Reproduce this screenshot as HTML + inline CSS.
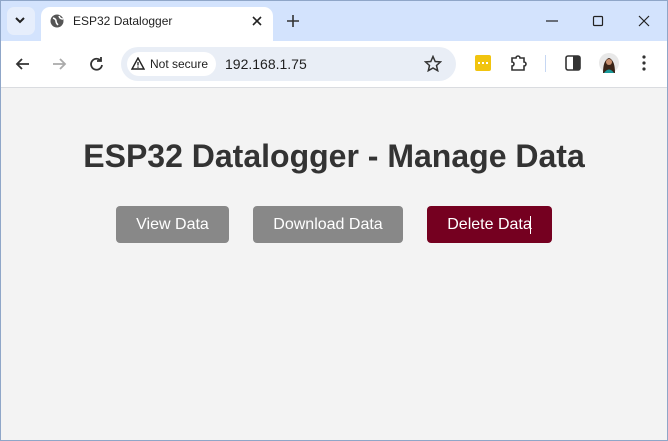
<!DOCTYPE html>
<html><head><style>
*{margin:0;padding:0;box-sizing:border-box}
body{width:668px;height:441px;overflow:hidden;font-family:"Liberation Sans",Arial,sans-serif;background:#f3f3f3;position:relative}
.frame{position:absolute;inset:0;border:1px solid #8fa6c8;pointer-events:none;z-index:9}
.tabs{position:absolute;left:0;top:0;width:668px;height:41px;background:#d3e3fd}
.tab{position:absolute;left:41px;top:7px;width:232px;height:34px;background:#fff;border-radius:9px 9px 0 0}
.tt{position:absolute;left:73px;top:14px;font-size:12px;color:#1f1f1f}
.tool{position:absolute;left:0;top:41px;width:668px;height:47px;background:#fff;border-bottom:1px solid #dadce0}
.omni{position:absolute;left:121px;top:47px;width:335px;height:34px;background:#e9eef6;border-radius:17px}
.ns{position:absolute;left:127px;top:52px;width:89px;height:24px;background:#fff;border-radius:12px}
h1{position:absolute;left:0;width:668px;top:138px;text-align:center;font-size:32px;font-weight:bold;color:#333}
.b{position:absolute;top:206px;height:37px;border-radius:4px;color:#fff;font-size:16px;line-height:37px;text-align:center;background:#888}
</style></head><body>
<div class="tabs"></div>
<div style="position:absolute;left:7px;top:7px;width:28px;height:28px;border-radius:7px;background:#e6eefc"></div>
<svg style="position:absolute;left:14px;top:16px" width="12" height="8"><path d="M2 2l4 4 4-4" stroke="#222" stroke-width="2" fill="none"/></svg>
<div class="tab"></div>
<svg style="position:absolute;left:50px;top:14px" width="14" height="14"><circle cx="7" cy="7" r="6.5" fill="#555"/><path d="M3 4q3 1 3 3t2 4M9 2q1 3 4 3" stroke="#fff" stroke-width="1.5" fill="none"/></svg>
<div class="tt">ESP32 Datalogger</div>
<svg style="position:absolute;left:252px;top:16px" width="10" height="10"><path d="M1 1l8 8M9 1l-8 8" stroke="#222" stroke-width="1.6"/></svg>
<svg style="position:absolute;left:287px;top:15px" width="12" height="12"><path d="M6 0v12M0 6h12" stroke="#333" stroke-width="1.6"/></svg>
<svg style="position:absolute;left:546px;top:14px" width="110" height="14"><path d="M0 7h12" stroke="#222" stroke-width="1.2"/><rect x="47.5" y="2.5" width="9" height="9" rx="1" stroke="#222" fill="none" stroke-width="1.2"/><path d="M93 2l10 10M103 2l-10 10" stroke="#222" stroke-width="1.2"/></svg>
<div class="tool"></div>
<svg style="position:absolute;left:15px;top:56px;" width="100" height="16"><path d="M14 8H2M7 3L2 8l5 5" stroke="#333" stroke-width="1.8" fill="none"/><path d="M38 8h12M45 3l5 5-5 5" stroke="#aaa" stroke-width="1.8" fill="none"/><path d="M86 5a5.5 5.5 0 1 0 1 4M86 1v4h-4" stroke="#333" stroke-width="1.8" fill="none"/></svg>
<div class="omni"></div><div class="ns"></div>
<svg style="position:absolute;left:131px;top:57px" width="14" height="13"><path d="M7 1L1 12h12z" stroke="#222" stroke-width="1.4" fill="none"/><path d="M7 5v3.5M7 9.5v1.2" stroke="#222" stroke-width="1.3"/></svg>
<div style="position:absolute;left:150px;top:57px;font-size:12px;color:#1f1f1f">Not secure</div>
<div style="position:absolute;left:225px;top:56px;font-size:14px;color:#1f1f1f">192.168.1.75</div>
<svg style="position:absolute;left:424px;top:55px" width="18" height="17"><path d="M9 1.5l2.2 5 5.3.4-4 3.6 1.2 5.2L9 13l-4.7 2.7 1.2-5.2-4-3.6 5.3-.4z" stroke="#333" stroke-width="1.5" fill="none"/></svg>
<div style="position:absolute;left:475px;top:55px;width:16px;height:16px;background:#f1c40f;border-radius:2px"></div>
<div style="position:absolute;left:478px;top:62px;width:10px;height:2px;border-top:2px dotted #fff"></div>
<svg style="position:absolute;left:510px;top:54px" width="18" height="18"><path d="M2 4h4a2 2 0 0 1 4 0h4v4a2 2 0 0 1 0 4v4H2v-4a2 2 0 0 0 0-4z" stroke="#333" stroke-width="1.6" fill="none"/></svg>
<div style="position:absolute;left:545px;top:55px;width:1px;height:17px;background:#c6d7f3"></div>
<svg style="position:absolute;left:565px;top:55px" width="16" height="16"><rect x="1" y="1" width="14" height="14" rx="2" stroke="#333" stroke-width="1.6" fill="none"/><rect x="8" y="1" width="7" height="14" fill="#333"/></svg>
<svg style="position:absolute;left:599px;top:53px" width="20" height="20"><circle cx="10" cy="10" r="10" fill="#e8e8e8"/><path d="M4 20q0-13 6-15 6 2 6 15z" fill="#3a2418"/><circle cx="10" cy="9" r="3" fill="#c89070"/><path d="M5 20q5-7 10 0z" fill="#1a9a9a"/></svg>
<svg style="position:absolute;left:642px;top:55px" width="4" height="16"><circle cx="2" cy="2" r="1.6" fill="#333"/><circle cx="2" cy="8" r="1.6" fill="#333"/><circle cx="2" cy="14" r="1.6" fill="#333"/></svg>
<h1>ESP32 Datalogger - Manage Data</h1>
<div class="b" style="left:116px;width:113px">View Data</div>
<div class="b" style="left:253px;width:150px">Download Data</div>
<div class="b" style="left:427px;width:125px;background:#750020">Delete Data</div>
<div style="position:absolute;left:530px;top:216px;width:1px;height:18px;background:#fff"></div>
<div class="frame"></div>
</body></html>
